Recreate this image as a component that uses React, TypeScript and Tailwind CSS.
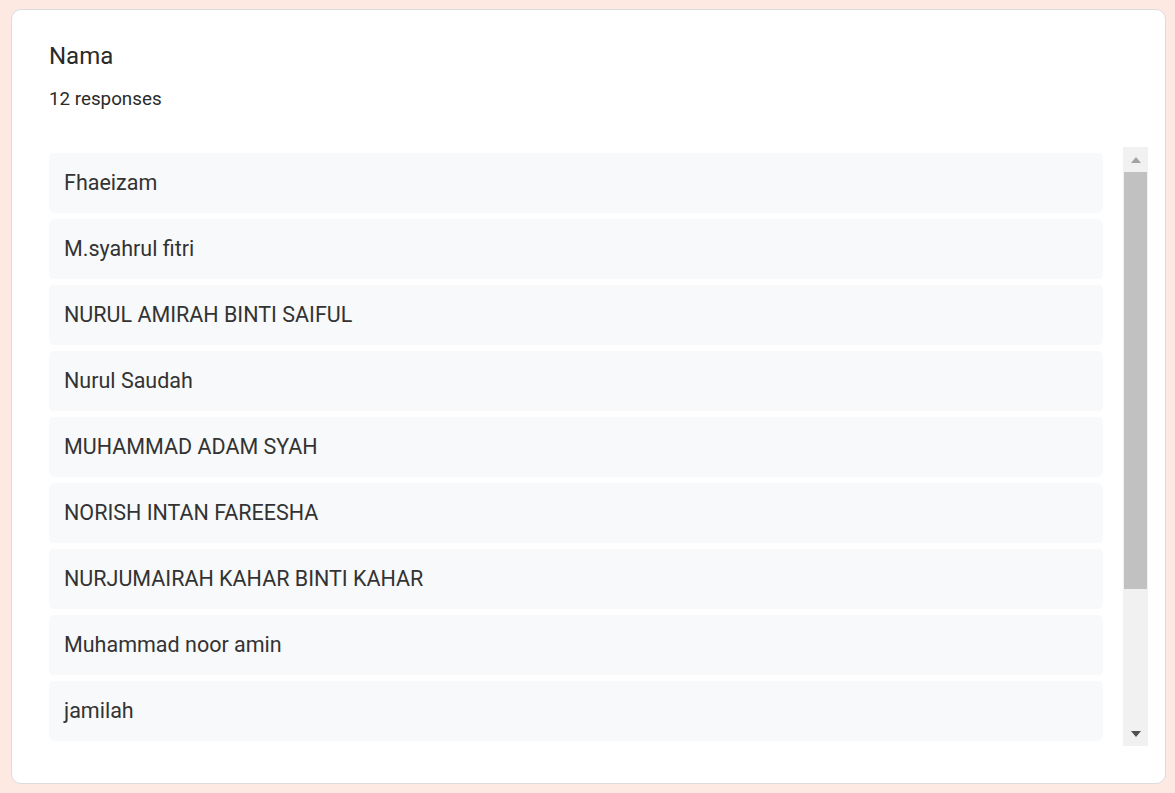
// only the rows visible in the scroll window are listed
const responses = [
  'Fhaeizam',
  'M.syahrul fitri',
  'NURUL AMIRAH BINTI SAIFUL',
  'Nurul Saudah',
  'MUHAMMAD ADAM SYAH',
  'NORISH INTAN FAREESHA',
  'NURJUMAIRAH KAHAR BINTI KAHAR',
  'Muhammad noor amin',
  'jamilah',
];

const ScrollBar = () => (
  <div className="flex w-[25px] shrink-0 flex-col bg-[#f1f1f1]">
    <div className="flex h-[25px] items-center justify-center">
      <svg width="10" height="6" viewBox="0 0 10 6">
        <path d="M5 0 L10 6 L0 6 Z" fill="#a3a3a3" />
      </svg>
    </div>
    <div className="mx-[1px] h-[417px] bg-[#c1c1c1]" />
    <div className="flex-1" />
    <div className="flex h-[25px] items-center justify-center">
      <svg width="10" height="6" viewBox="0 0 10 6">
        <path d="M0 0 L10 0 L5 6 Z" fill="#505050" />
      </svg>
    </div>
  </div>
);

export default function App() {
  return (
    <div className="min-h-[793px] bg-[#fde8e2] pt-[9px] pr-[9px] pb-[8px] pl-[11px] font-['Roboto',sans-serif]">
      <div className="rounded-[10px] border border-[#dadce0] bg-white pt-[30px] pr-[17px] pb-[37px] pl-[37px]">
        <div className="text-[24px] leading-[32px] text-[#2a2a2a]">Nama</div>
        <div className="mt-[15px] text-[18.8px] leading-[24px] text-[#2a2a2a]">12 responses</div>
        <div className="mt-[36px] flex h-[599px]">
          <div className="flex-1 overflow-hidden pr-[20px]">
            <div className="flex flex-col gap-[6px] pt-[6px]">
              {responses.map((r) => (
                <div
                  key={r}
                  className="flex h-[60px] shrink-0 items-center rounded-[5px] bg-[#f8f9fa] px-[15px] text-[21.5px] text-[#333333]"
                >
                  {r}
                </div>
              ))}
            </div>
          </div>
          <ScrollBar />
        </div>
      </div>
    </div>
  );
}
